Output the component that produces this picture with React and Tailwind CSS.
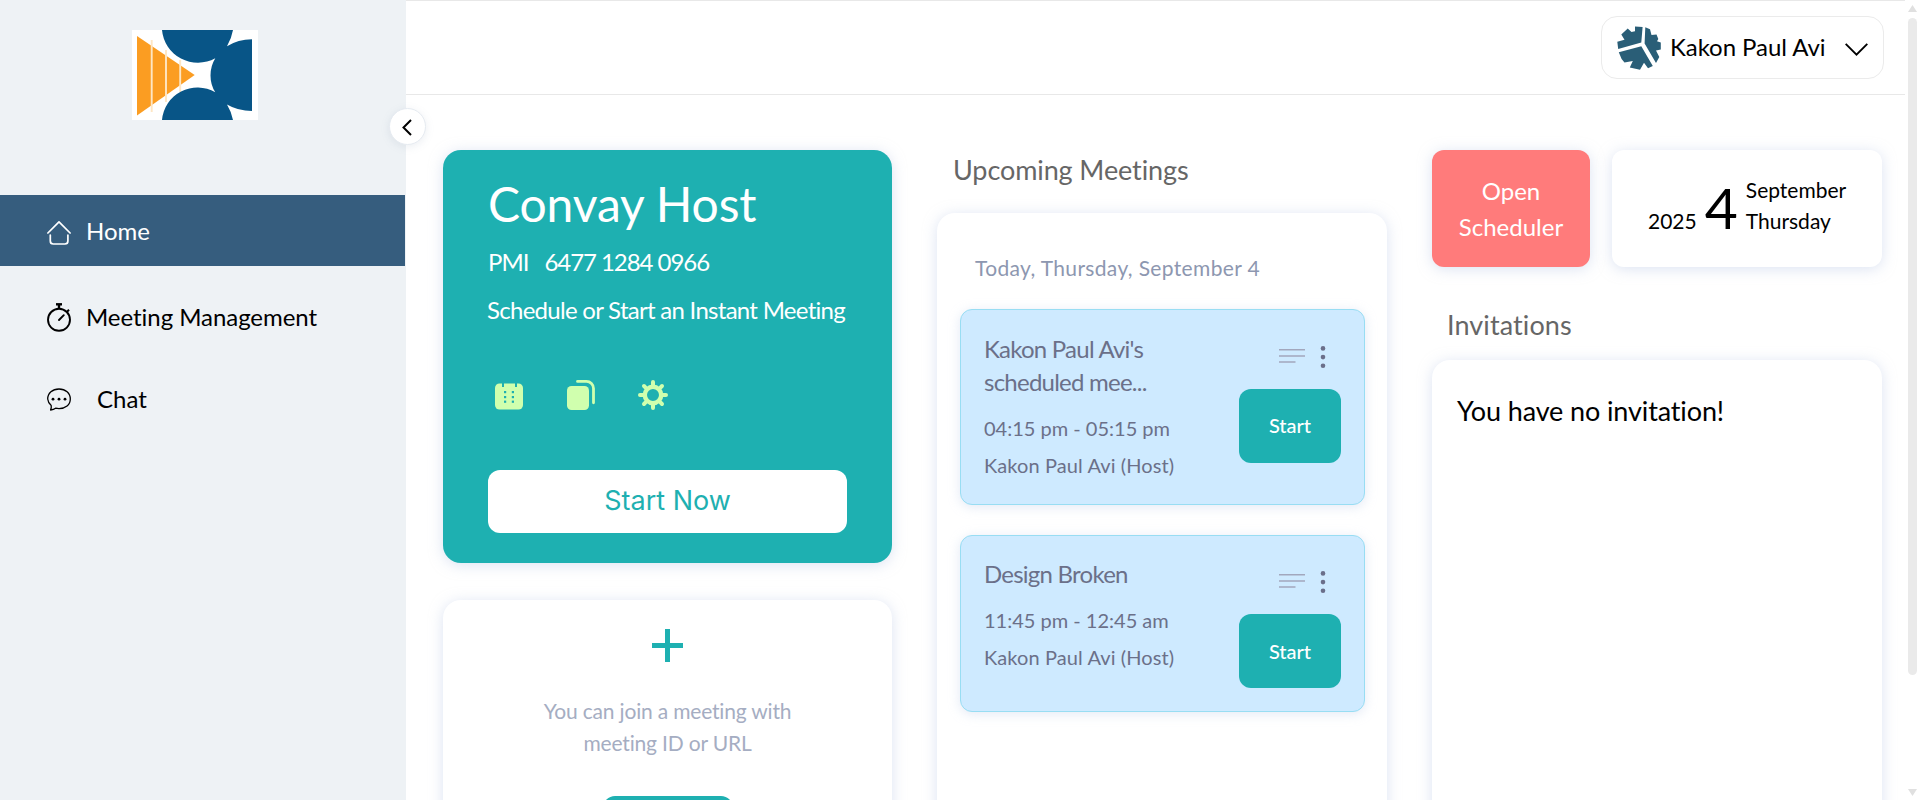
import React from "react";

const shadow = "shadow-[0_2px_14px_rgba(185,200,230,0.5)]";

function T({ className = "", children }) {
  return <span className={"inline-block whitespace-pre " + className}>{children}</span>;
}

function Logo() {
  return (
    <svg width="126" height="90" viewBox="0 0 126 90">
      <rect width="126" height="90" fill="#fff" />
      <path d="M5 6 L62.7 45 L5 85.5Z" fill="#fb9d22" />
      <path d="M19.7 10V82M34 20V72M48.2 30V62" stroke="#fee6c4" strokeWidth="1.9" />
      <path fill="#085587" d="M30 0 H101 Q99.5 8.5 95 16.3 Q106 9.2 120 9.2 V81 Q106 81 95 74.5 Q99.5 82 101 90 H30 A35.6 35.6 0 0 1 83.3 62.3 Q78.5 55 78.5 45.5 Q78.5 36 83.3 28.3 A36 36 0 0 1 30 0Z" />
    </svg>
  );
}

function HomeIcon() {
  return (
    <svg width="24" height="24" viewBox="0 0 24 24" fill="none" stroke="#fff" strokeWidth="1.7" strokeLinecap="round" strokeLinejoin="round">
      <path d="M0.9 12 L12 0.9 L23.1 12" />
      <path d="M3.3 14 V20 a3 3 0 0 0 3 3 H17.9 a3 3 0 0 0 3 -3 V14" />
    </svg>
  );
}

function TimerIcon() {
  return (
    <svg width="24" height="29" viewBox="0 0 24 29" fill="none" stroke="#000" strokeWidth="1.9">
      <circle cx="12" cy="16.8" r="11" />
      <path d="M9 1.3 H15" strokeWidth="2.4" />
      <path d="M12 1.5 V6" strokeWidth="2.4" />
      <path d="M19.6 9.2 L22 6.8" strokeWidth="2" />
      <path d="M12 17 L16.8 12.2" strokeLinecap="round" />
    </svg>
  );
}

function ChatIcon() {
  return (
    <svg width="24" height="23" viewBox="0 0 24 23" fill="none" stroke="#000" strokeWidth="1.3" strokeLinejoin="round">
      <path d="M3.6 22 Q4.6 19.5 4.2 17.6 A10.6 10.2 0 0 1 0.7 11 C0.7 5 5.5 1 12 1 C18.5 1 23.3 5 23.3 11 C23.3 17 18.5 20.6 12 20.6 Q10.2 20.6 8.6 20.2 Q6.6 21.6 3.6 22Z" />
      <g fill="#000" stroke="none"><circle cx="6" cy="11.2" r="1.4" /><circle cx="12" cy="11.2" r="1.4" /><circle cx="18" cy="11.2" r="1.4" /></g>
    </svg>
  );
}

function Avatar() {
  return (
    <svg width="44" height="45" viewBox="0 0 44 45" fill="#2a5e77">
      <path d="M18 1.5 L25.6 2 L24.3 17.5 L1.2 24 L0.3 16.7 L7.5 14.8 L4.3 9.5 L10.7 3.6 L14.5 7 L18 6.2Z" />
      <path d="M28.3 2.3 L33 4.3 L34.5 10 L39.5 9.5 L41.3 14 L40 16.3 L43.8 17.5 L43.8 24.5 L39 25.5 L42.3 32 L39 38 L27.6 18.5Z" />
      <path d="M1.8 27.3 L24.3 21.3 L35.8 41 L31 43.3 L27 37.8 L23 44.8 L12.8 42.6 L15.8 36 L7.5 37.5 L4.6 34Z" />
    </svg>
  );
}

function CalendarIcon() {
  return (
    <svg width="28" height="27" viewBox="0 0 28 27">
      <rect x="0" y="0.5" width="28" height="26" rx="4.5" fill="#d0ffae" />
      <g fill="#1eb0b1">
        <rect x="7" y="0" width="2" height="4" /><rect x="20" y="0" width="2" height="4" />
        <rect x="9" y="8" width="2.2" height="2.2" /><rect x="9" y="13" width="2.2" height="2.2" /><rect x="9" y="17.6" width="2.2" height="2.2" />
        <rect x="16.8" y="8" width="2.2" height="2.2" /><rect x="16.8" y="13" width="2.2" height="2.2" /><rect x="16.8" y="17.6" width="2.2" height="2.2" />
      </g>
    </svg>
  );
}

function CopyIcon() {
  return (
    <svg width="28" height="30" viewBox="0 0 28 30">
      <rect x="0" y="6" width="22" height="24" rx="4.5" fill="#d0ffae" />
      <path d="M10.5 1.4 H19.5 a7 7 0 0 1 7 7 V22.8" fill="none" stroke="#d0ffae" strokeWidth="2.8" strokeLinecap="round" />
    </svg>
  );
}

function GearIcon() {
  return (
    <svg width="30" height="30" viewBox="-15 -15 30 30" fill="none" stroke="#d0ffae">
      <circle r="8.2" strokeWidth="4.4" />
      <path strokeWidth="4" strokeLinecap="round" d="M0 -10V-13M0 10V13M-10 0H-13M10 0H13M7.2 7.2L9 9M-7.2 7.2L-9 9M7.2 -7.2L9 -9M-7.2 -7.2L-9 -9" />
    </svg>
  );
}

function MeetingCard({ className, titleLines, time, host, timeGap, actionsGap, startClass }) {
  return (
    <div className={"flex justify-between rounded-xl border border-[#98ddf3] bg-[#ceeaff] pl-[23px] pr-[23px] text-[#6b7089] shadow-[0_2px_12px_rgba(185,200,230,0.4)] " + className}>
      <div>
        <div className="text-[24px] leading-[33px] tracking-[-0.76px]">
          {titleLines.map((l) => <div key={l}><T>{l}</T></div>)}
        </div>
        <div className={"text-[20px] leading-[37px] " + timeGap}>
          <div><T>{time}</T></div>
          <div><T className="tracking-[0.1px]">{host}</T></div>
        </div>
      </div>
      <div className={"flex flex-col " + actionsGap}>
        <svg className="ml-10" width="48" height="22" viewBox="0 0 48 22">
          <path d="M0 3.8H26M0 9.9H26M0 15.9H16.5" stroke="#a2a7bd" strokeWidth="1.5" />
          <g fill="#6b6f8a"><circle cx="44" cy="2.4" r="2.3" /><circle cx="44" cy="11.1" r="2.3" /><circle cx="44" cy="19.7" r="2.3" /></g>
        </svg>
        <button className={"mt-[21px] h-[74px] w-[102px] rounded-xl bg-[#1eb0b1] text-[20px] font-medium text-white " + startClass}><T>Start</T></button>
      </div>
    </div>
  );
}

export default function App() {
  return (
    <div className="flex h-[800px] w-[1920px] overflow-hidden bg-white font-['Lato',sans-serif] text-black [font-variant-ligatures:none]">
      <aside className="relative w-[406px] shrink-0 bg-[#eef2f5]">
        <div className="flex h-[195px] justify-center pt-[30px] pr-4"><Logo /></div>
        <nav className="text-[24px] leading-[36px]">
          <div className="flex h-[71px] w-[405px] items-center bg-[#365d7e] pl-[47px] text-white"><span className="mt-[5px]"><HomeIcon /></span><T className="ml-[15px]">Home</T></div>
          <div className="flex h-[102px] items-center pl-[47px]"><TimerIcon /><T className="ml-[15px] tracking-[-0.05px]">Meeting Management</T></div>
          <div className="flex h-[62px] items-center pl-[47px]"><ChatIcon /><T className="ml-[26px]">Chat</T></div>
        </nav>
        <button className="absolute left-[389px] top-[108px] z-10 flex size-[37px] items-center justify-center rounded-full border border-[#e6ebf1] bg-white pr-[2px] pt-[1px] shadow-[0_2px_8px_rgba(120,140,170,0.15)]">
          <svg width="10" height="17" viewBox="0 0 10 17" fill="none" stroke="#000" strokeWidth="2"><path d="M9 1L1.5 8.5L9 16" /></svg>
        </button>
      </aside>
      <main className="w-[1499px] shrink-0">
        <header className="flex h-[95px] justify-end border-y border-[#e8e8e8] pr-[21px] pt-[15px]">
          <div className="flex h-[63px] w-[283px] items-center rounded-2xl border border-[#ebebeb] pl-[15px]">
            <Avatar /><T className="mb-[2px] ml-[9px] text-[24px] tracking-[-0.05px]">Kakon Paul Avi</T>
            <svg className="ml-5 mt-1" width="23" height="13" viewBox="0 0 23 13" fill="none" stroke="#000" strokeWidth="1.9"><path d="M0.7 0.9L11.5 11.6L22.3 0.9" /></svg>
          </div>
        </header>
        <div className="grid grid-cols-[449px_450px_450px] gap-[45px] pl-[37px] pt-[55px]">
          <div>
            <section className={"h-[413px] rounded-[18px] bg-[#1eb0b1] px-[45px] pt-[25px] text-white " + shadow}>
              <h1 className="text-[48px] leading-[58px]"><T className="tracking-[-0.1px]">Convay Host</T></h1>
              <div className="mt-[11px] flex text-[24px] leading-[36px]"><T className="tracking-[-1px]">PMI</T><T className="ml-[16px] tracking-[-1.05px]">6477 1284 0966</T></div>
              <p className="mt-3 text-[24px] leading-[36px]"><T className="-ml-px tracking-[-0.72px]">Schedule or Start an Instant Meeting</T></p>
              <div className="mt-[52px] flex h-[30px] items-end pl-[7px]"><CalendarIcon /><span className="ml-[44px]"><CopyIcon /></span><span className="ml-[43px]"><GearIcon /></span></div>
              <button className="mt-[60px] h-[63px] w-[359px] rounded-xl bg-white font-['Inter',sans-serif] text-[27px] text-[#1eb0b1]"><T>Start Now</T></button>
            </section>
            <section className={"mt-[37px] flex h-[300px] flex-col items-center rounded-[18px] bg-white pt-[29px] " + shadow}>
              <svg width="31" height="33" viewBox="0 0 31 33" stroke="#1eb0b1" strokeWidth="5"><path d="M15.5 0V33M0 16.5H31" /></svg>
              <p className="mt-[33px] text-center text-[21px] leading-[32px] tracking-[-0.18px] text-[#a5adc2]"><T>You can join a meeting with</T><br /><T>meeting ID or URL</T></p>
              <div className="mt-[37px] h-[60px] w-[130px] rounded-xl bg-[#1eb0b1]" />
            </section>
          </div>
          <div>
            <h2 className="h-[63px] pl-[16px] text-[27px] leading-[40px] text-[#666]"><T className="tracking-[-0.1px]">Upcoming Meetings</T></h2>
            <section className={"h-[640px] rounded-[18px] bg-white px-[23px] pt-[40px] " + shadow}>
              <p className="pl-[15px] text-[21px] leading-[30px] tracking-[0.35px] text-[#8d97b0]"><T>Today, Thursday, September 4</T></p>
              <MeetingCard className="mt-[26px] h-[196px] w-[405px] pt-[22px]" titleLines={["Kakon Paul Avi's", "scheduled mee..."]} time="04:15 pm - 05:15 pm" host="Kakon Paul Avi (Host)" timeGap="mt-[12px]" actionsGap="mt-[14px]" startClass="pb-[2px]" />
              <MeetingCard className="mt-[30px] h-[177px] w-[405px] pt-[21px]" titleLines={["Design Broken"]} time="11:45 pm - 12:45 am" host="Kakon Paul Avi (Host)" timeGap="mt-[12px]" actionsGap="mt-[14px]" startClass="" />
            </section>
          </div>
          <div>
            <div className="flex gap-[22px]">
              <button className={"h-[117px] w-[158px] rounded-xl bg-[#ff7b7b] text-[24px] leading-[36px] text-white " + shadow}><T>Open</T><br /><T>Scheduler</T></button>
              <div className={"flex h-[117px] w-[270px] rounded-xl bg-white pl-[36px] text-[21px] " + shadow}>
                <T className="mt-[55px] leading-[32px]">2025</T>
                <T className="ml-[8px] mt-[27px] text-[57px] leading-[60px]">4</T>
                <div className="ml-[8px] mt-[24px] leading-[31px]"><T>September</T><br /><T>Thursday</T></div>
              </div>
            </div>
            <h2 className="mt-[38px] h-[55px] pl-[15px] text-[27px] leading-[40px] text-[#666]"><T className="tracking-[0.1px]">Invitations</T></h2>
            <section className={"h-[600px] rounded-[18px] bg-white pl-[25px] pt-[31px] text-[27px] leading-[40px] " + shadow}><T className="tracking-[-0.12px]">You have no invitation!</T></section>
          </div>
        </div>
      </main>
      <div className="ml-[3px] flex w-[9px] shrink-0 flex-col pt-[5px]">
        <svg width="9" height="7" viewBox="0 0 9 7" fill="#e0e0e0"><path d="M0 7L4.5 0L9 7Z" /></svg>
        <div className="mt-[6px] h-[657px] rounded-full bg-[#eaeaea]" />
        <svg className="mt-[114px]" width="9" height="7" viewBox="0 0 9 7" fill="#e0e0e0"><path d="M0 0L4.5 7L9 0Z" /></svg>
      </div>
    </div>
  );
}
